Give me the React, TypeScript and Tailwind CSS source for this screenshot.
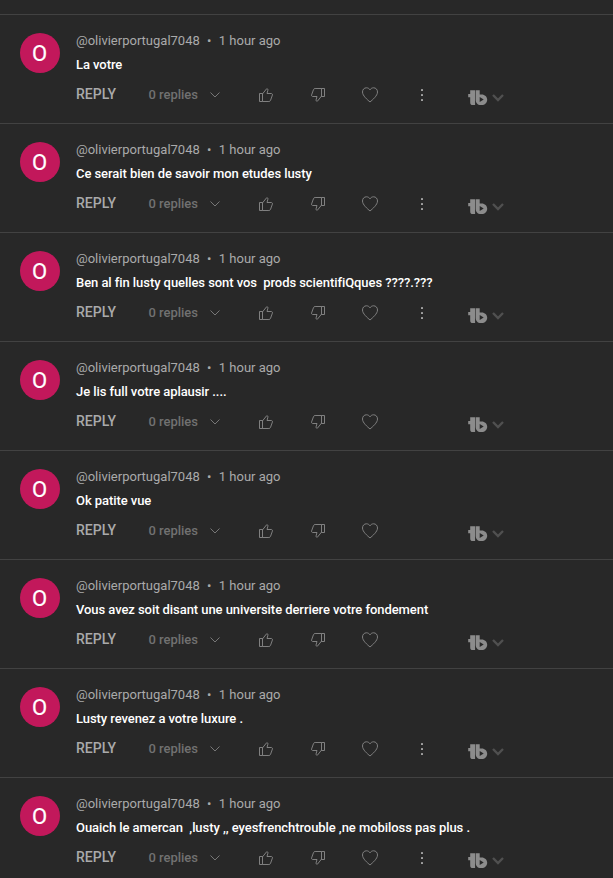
interface Comment {
  text: string;
  hasMenu: boolean;
}

const comments: Comment[] = [
  { text: "La votre", hasMenu: true },
  { text: "Ce serait bien de savoir mon etudes lusty", hasMenu: true },
  { text: "Ben al fin lusty quelles sont vos  prods scientifiQques ????.???", hasMenu: true },
  { text: "Je lis full votre aplausir ....", hasMenu: false },
  { text: "Ok patite vue", hasMenu: false },
  { text: "Vous avez soit disant une universite derriere votre fondement", hasMenu: false },
  { text: "Lusty revenez a votre luxure .", hasMenu: true },
  { text: "Ouaich le amercan  ,lusty ,, eyesfrenchtrouble ,ne mobiloss pas plus .", hasMenu: true },
];

function ThumbIcon({ down = false }: { down?: boolean }) {
  return (
    <svg
      className={`h-4 w-4 shrink-0 ${down ? "rotate-180" : ""}`}
      viewBox="0 0 16 16"
      fill="none"
      stroke="#8a8a8a"
      strokeWidth="0.9"
    >
      <path d="M1.5 6.5h3v8h-3zM4.5 6.9l4.1-5.1c.9-.2 1.5.4 1.3 1.4L9 6.5h4.2c1 0 1.5.8 1.2 1.6l-1.9 5.3c-.3.7-.8 1.1-1.6 1.1H4.5" />
    </svg>
  );
}

function HeartIcon() {
  return (
    <svg className="h-4 w-4 shrink-0" viewBox="0 0 16 16" fill="none" stroke="#8a8a8a" strokeWidth="0.9">
      <path d="M8 15C5.4 12.7.5 8.8.5 5 .5 2.5 2.2.8 4.4.8 5.9.8 7.2 1.5 8 2.8 8.8 1.5 10.1.8 11.6.8c2.2 0 3.9 1.7 3.9 4.2 0 3.8-4.9 7.7-7.5 10z" />
    </svg>
  );
}

function MenuIcon() {
  return (
    <svg className="h-4 w-4 shrink-0" viewBox="0 0 16 16" fill="#aaa">
      <rect x="7" y="2" width="2" height="2" rx="0.4" />
      <rect x="7" y="7" width="2" height="2" rx="0.4" />
      <rect x="7" y="12" width="2" height="2" rx="0.4" />
    </svg>
  );
}

function BuddyLogo() {
  return (
    <svg className="h-4 w-5 shrink-0" viewBox="0 0 20 16">
      <path
        fill="#8c8c8c"
        fillRule="evenodd"
        d="M2.2.3h4.9v14.8H4.8a2.6 2.6 0 0 1-2.6-2.6V7.2H.2V4h2zM7.7.3h4v4.1h2.1c3 0 5.4 2.3 5.4 5.3s-2.4 5.4-5.4 5.4h-1.2c-3 0-4.900-2.300-4.900-5.400zM11.700 6.900v5l4-2.500z"
      />
    </svg>
  );
}

function CommentRow({ comment }: { comment: Comment }) {
  return (
    <div className="flex h-[109px] border-b border-[#424242] pl-5 pt-[18px]">
      <div className="flex h-10 w-10 shrink-0 items-center justify-center rounded-full bg-[#c2185b] pr-px pt-px text-[22px] leading-none text-white [-webkit-text-stroke:0.2px_white]">
        O
      </div>
      <div className="ml-4 flex-1">
        <div className="flex h-4 items-center whitespace-pre text-[13px] leading-4 text-[#aaa]">
          <span>@olivierportugal7048</span>
          <span className="w-[19px] text-center">•</span>
          <span>1 hour ago</span>
        </div>
        <p className="mt-2 h-4 whitespace-pre text-[13px] font-medium leading-4 tracking-[-0.065px] text-white">
          {comment.text}
        </p>
        <div className="mt-[13px] flex h-[18px] items-center">
          <button className="w-[72.5px] pb-0.5 text-left text-sm font-medium leading-4 text-[#aaa]">REPLY</button>
          <button className="flex w-[109.5px] items-center text-[13px] font-medium tracking-[-0.03px] text-[#717171]">
            <span className="w-[61.5px] text-left">0 replies</span>
            <svg className="h-[6px] w-[10px]" viewBox="0 0 10 6" fill="none" stroke="#777">
              <path d="M.5.5 5 5 9.5.5" />
            </svg>
          </button>
          <div className="flex items-center gap-9">
            <ThumbIcon />
            <ThumbIcon down />
            <HeartIcon />
            <div className="h-4 w-4">{comment.hasMenu && <MenuIcon />}</div>
          </div>
          <div className="ml-[38px] mt-1.5 flex items-center gap-1">
            <BuddyLogo />
            <svg className="h-2 w-3" viewBox="0 0 12 8" fill="none" stroke="#505050" strokeWidth="2.4">
              <path d="m1 1 5 5 5-5" />
            </svg>
          </div>
        </div>
      </div>
    </div>
  );
}

export default function App() {
  return (
    <main className="h-[878px] w-full overflow-hidden bg-[#282828] font-['Roboto',sans-serif]">
      <div className="h-[15px] border-b border-[#424242]" />
      {comments.map((comment) => (
        <CommentRow key={comment.text} comment={comment} />
      ))}
    </main>
  );
}
